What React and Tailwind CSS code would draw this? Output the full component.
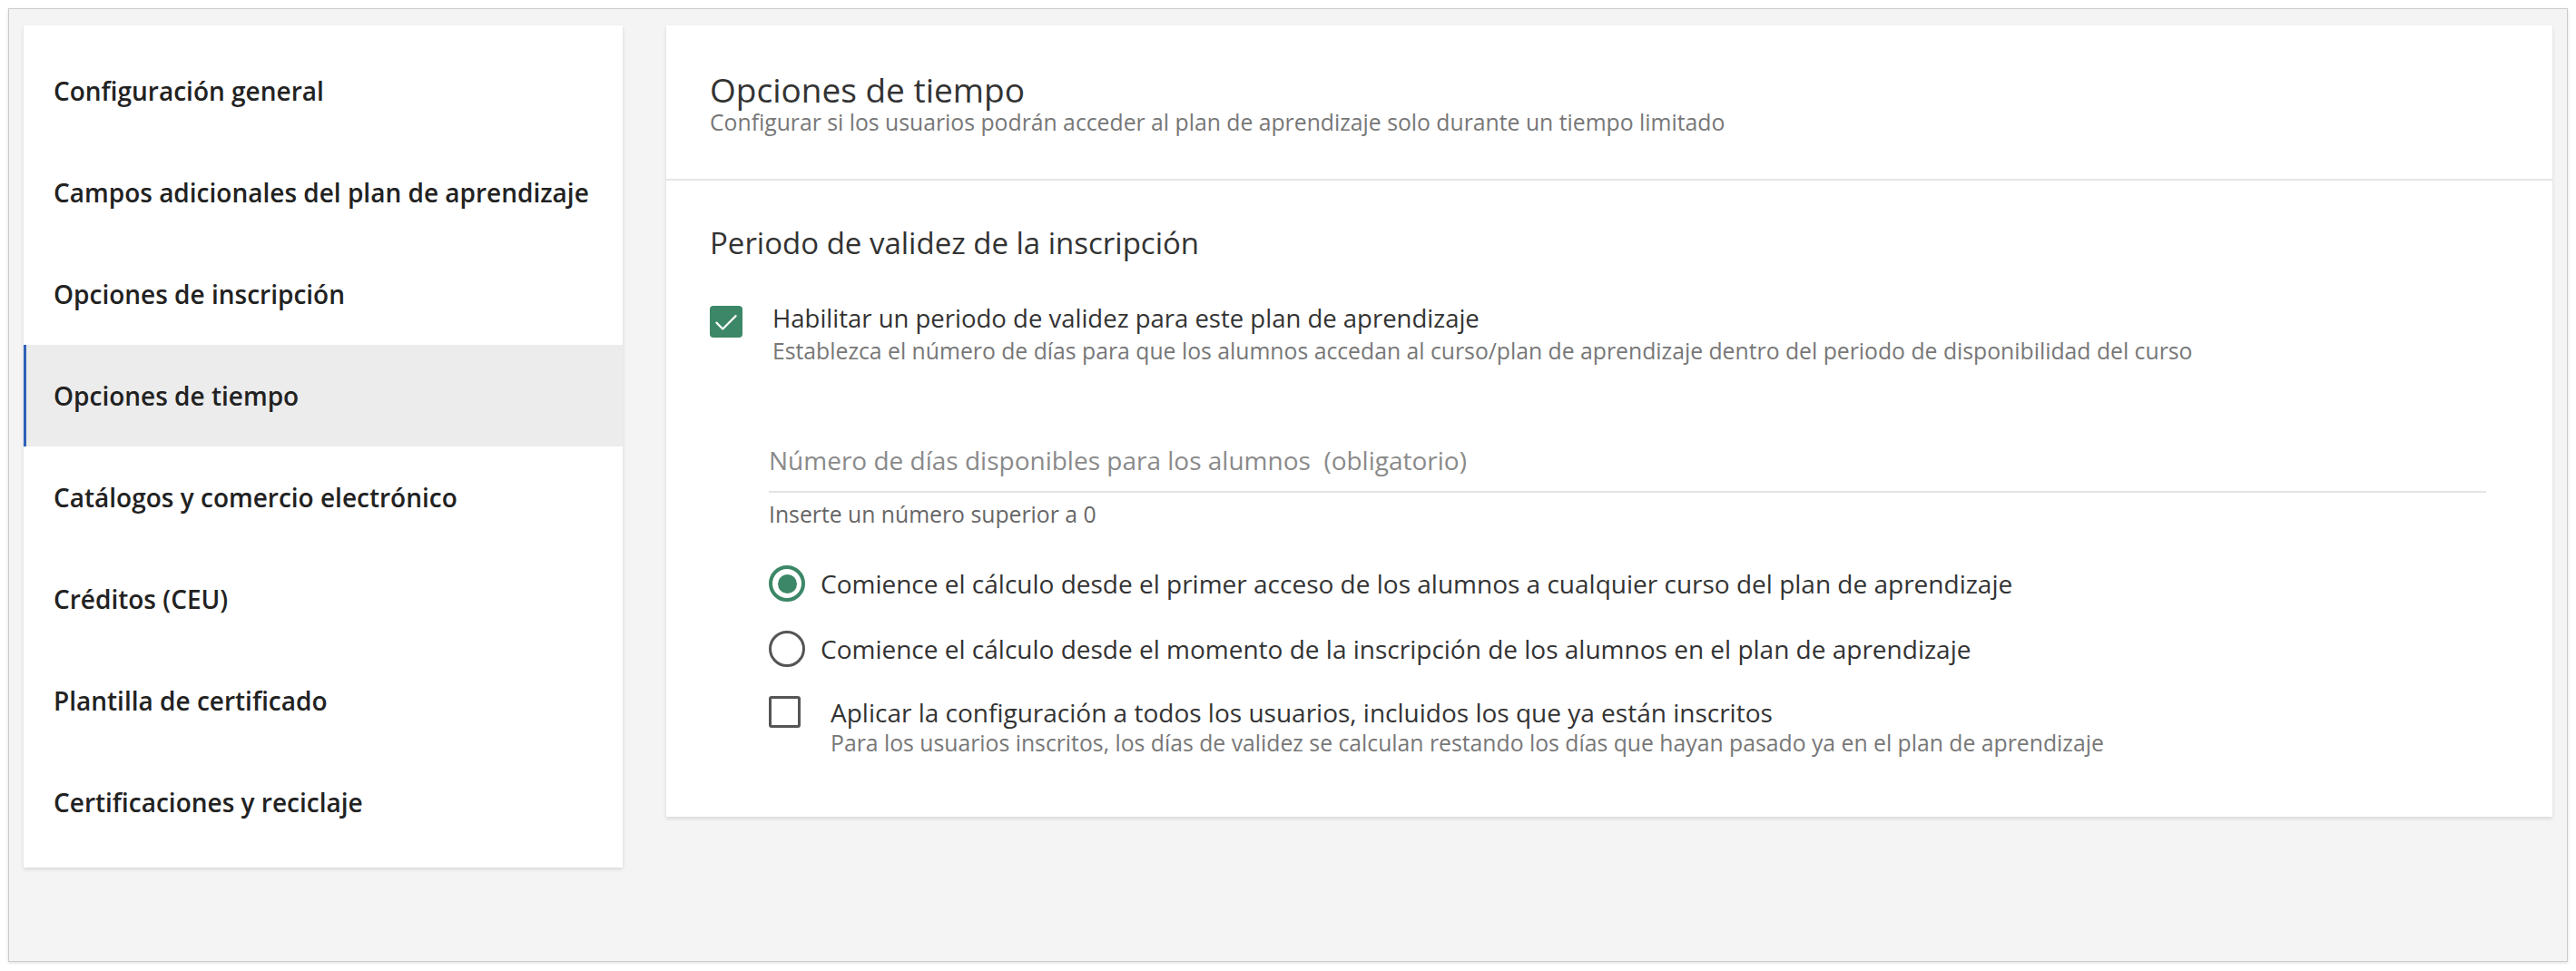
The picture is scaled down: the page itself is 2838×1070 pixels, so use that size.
import React, { useState } from "react";

const menuItems = [
  "Configuración general",
  "Campos adicionales del plan de aprendizaje",
  "Opciones de inscripción",
  "Opciones de tiempo",
  "Catálogos y comercio electrónico",
  "Créditos (CEU)",
  "Plantilla de certificado",
  "Certificaciones y reciclaje",
];

const Sidebar = ({ active, onSelect }) => {
  return (
    <div className="w-[660px] shrink-0 self-start bg-white py-[16px] shadow-[0_2px_4px_rgba(0,0,0,0.12)]">
      {menuItems.map((item) => (
        <button
          key={item}
          onClick={() => onSelect(item)}
          className={
            item === active
              ? "flex h-[112px] w-full items-center border-l-[3px] border-[#2f62b8] bg-[#ececec] pl-[30px] text-left text-[28px] font-semibold text-[#222]"
              : "flex h-[112px] w-full items-center border-l-[3px] border-transparent pl-[30px] text-left text-[28px] font-semibold text-[#222]"
          }
        >
          {item}
        </button>
      ))}
    </div>
  );
};

const CheckIcon = () => (
  <svg viewBox="0 0 24 24" className="h-[30px] w-[30px]" fill="none" stroke="white" strokeWidth="1.7" strokeLinecap="round" strokeLinejoin="round">
    <path d="M3.5 12.5l5.5 5.5L20.5 6.5" />
  </svg>
);

const App = () => {
  const [active, setActive] = useState("Opciones de tiempo");
  const [enabled, setEnabled] = useState(true);
  const [start, setStart] = useState("first");
  const [applyAll, setApplyAll] = useState(false);
  const [days, setDays] = useState("");

  return (
    <div className="min-h-screen bg-white pl-[9px] pt-[9px] font-['Open_Sans',sans-serif]">
      <div className="flex h-[1051px] w-[2820px] gap-[48px] border border-[#cdcdcd] bg-[#f4f4f4] px-[16px] pt-[18px] shadow-[0_1px_3px_rgba(0,0,0,0.15)]">
        <Sidebar active={active} onSelect={setActive} />

        <div className="flex-1 self-start bg-white shadow-[0_2px_4px_rgba(0,0,0,0.12)]">
          {/* header */}
          <div className="border-b-2 border-[#e6e6e6] pb-[47px] pl-[48px] pt-[50px]">
            <h1 className="text-[37px] leading-[42px] text-[#333]">Opciones de tiempo</h1>
            <p className="text-[24.75px] leading-[30px] text-[#777]">
              Configurar si los usuarios podrán acceder al plan de aprendizaje solo durante un tiempo limitado
            </p>
          </div>

          <div className="pb-[65px] pl-[48px] pr-[73px] pt-[49px]">
            <h2 className="text-[33px] leading-[40px] text-[#333]">Periodo de validez de la inscripción</h2>

            <div className="mt-[45px] flex gap-[33px]">
              <button
                onClick={() => setEnabled(!enabled)}
                className={
                  enabled
                    ? "mt-[4px] flex h-[35px] w-[36px] shrink-0 items-center justify-center rounded-[4px] bg-[#3c8767]"
                    : "mt-[4px] flex h-[35px] w-[36px] shrink-0 items-center justify-center rounded-[4px] border-[3px] border-[#555]"
                }
              >
                {enabled && <CheckIcon />}
              </button>
              <div>
                <div className="text-[27.5px] leading-[36px] text-[#333]">
                  Habilitar un periodo de validez para este plan de aprendizaje
                </div>
                <div className="mt-[2px] text-[24.75px] leading-[32px] text-[#777]">
                  Establezca el número de días para que los alumnos accedan al curso/plan de aprendizaje dentro del periodo de disponibilidad del curso
                </div>
              </div>
            </div>

            <div className="ml-[65px] mt-[86px]">
              <input
                value={days}
                onChange={(e) => setDays(e.target.value)}
                placeholder="Número de días disponibles para los alumnos  (obligatorio)"
                className="block w-full border-b-2 border-[#e3e3e3] pb-[16px] text-[28px] leading-[36px] text-[#333] outline-none placeholder:text-[#8a8a8a]"
              />
              <div className="mt-[8px] text-[24.75px] leading-[32px] text-[#666]">Inserte un número superior a 0</div>

              <label className="mt-[40px] flex h-[40px] cursor-pointer items-center gap-[17px]" onClick={() => setStart("first")}>
                <span
                  className={
                    start === "first"
                      ? "flex h-[40px] w-[40px] items-center justify-center rounded-full border-[4px] border-[#3c8767]"
                      : "flex h-[40px] w-[40px] items-center justify-center rounded-full border-[3px] border-[#555]"
                  }
                >
                  {start === "first" && <span className="h-[21px] w-[21px] rounded-full bg-[#3c8767]" />}
                </span>
                <span className="text-[28px] leading-[36px] text-[#333]">
                  Comience el cálculo desde el primer acceso de los alumnos a cualquier curso del plan de aprendizaje
                </span>
              </label>

              <label className="mt-[32px] flex h-[40px] cursor-pointer items-center gap-[17px]" onClick={() => setStart("enroll")}>
                <span
                  className={
                    start === "enroll"
                      ? "flex h-[40px] w-[40px] items-center justify-center rounded-full border-[4px] border-[#3c8767]"
                      : "flex h-[40px] w-[40px] items-center justify-center rounded-full border-[3px] border-[#555]"
                  }
                >
                  {start === "enroll" && <span className="h-[21px] w-[21px] rounded-full bg-[#3c8767]" />}
                </span>
                <span className="text-[28px] leading-[36px] text-[#333]">
                  Comience el cálculo desde el momento de la inscripción de los alumnos en el plan de aprendizaje
                </span>
              </label>

              <div className="mt-[32px] flex gap-[33px]">
                <button
                  onClick={() => setApplyAll(!applyAll)}
                  className={
                    applyAll
                      ? "flex h-[35px] w-[35px] shrink-0 items-center justify-center rounded-[3px] bg-[#3c8767]"
                      : "h-[35px] w-[35px] shrink-0 rounded-[3px] border-[3px] border-[#555]"
                  }
                >
                  {applyAll && <CheckIcon />}
                </button>
                <div>
                  <div className="text-[28px] leading-[36px] text-[#333]">
                    Aplicar la configuración a todos los usuarios, incluidos los que ya están inscritos
                  </div>
                  <div className="text-[24.75px] leading-[32px] text-[#777]">
                    Para los usuarios inscritos, los días de validez se calculan restando los días que hayan pasado ya en el plan de aprendizaje
                  </div>
                </div>
              </div>
            </div>
          </div>
        </div>
      </div>
    </div>
  );
};

export default App;
